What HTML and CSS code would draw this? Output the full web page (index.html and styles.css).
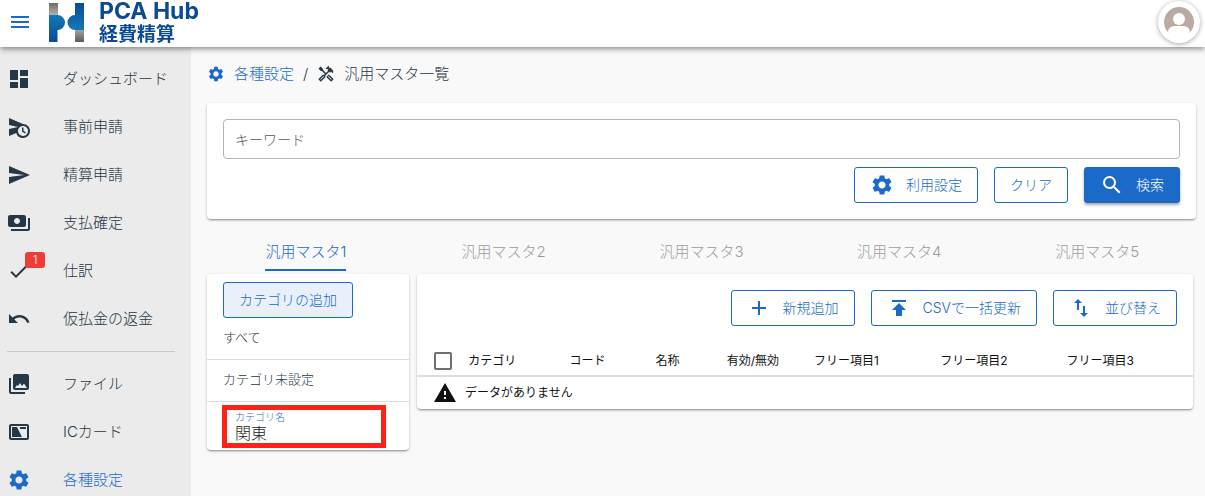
FILE: index.html
```html
<!DOCTYPE html>
<html lang="ja">
<head>
<meta charset="utf-8">
<title>汎用マスタ一覧 - PCA Hub 経費精算</title>
<link rel="stylesheet" href="styles.css">
</head>
<body>
<svg class="sprite" aria-hidden="true">
  <symbol id="gear" viewBox="0 0 24 24"><path d="M19.14 12.94c.04-.3.06-.61.06-.94 0-.32-.02-.64-.07-.94l2.03-1.58c.18-.14.23-.41.12-.61l-1.92-3.32c-.12-.22-.37-.29-.59-.22l-2.39.96c-.5-.38-1.03-.7-1.62-.94l-.36-2.54c-.04-.24-.24-.41-.48-.41h-3.84c-.24 0-.43.17-.47.41l-.36 2.54c-.59.24-1.13.57-1.62.94l-2.39-.96c-.22-.08-.47 0-.59.22L2.74 8.87c-.12.21-.08.47.12.61l2.03 1.58c-.05.3-.09.63-.09.94s.02.64.07.94l-2.03 1.58c-.18.14-.23.41-.12.61l1.92 3.32c.12.22.37.29.59.22l2.39-.96c.5.38 1.03.7 1.62.94l.36 2.54c.05.24.24.41.48.41h3.84c.24 0 .44-.17.47-.41l.36-2.54c.59-.24 1.13-.56 1.62-.94l2.39.96c.22.08.47 0 .59-.22l1.92-3.32c.12-.22.07-.47-.12-.61l-2.01-1.58zM12 15.6c-1.98 0-3.6-1.62-3.6-3.6s1.62-3.6 3.6-3.6 3.6 1.62 3.6 3.6-1.62 3.6-3.6 3.6z"/></symbol>
</svg>
<header class="topbar">
  <button class="menu-button" aria-label="メニュー"><svg class="icon" viewBox="0 0 24 24"><path d="M3 18h18v-2H3v2zm0-5h18v-2H3v2zm0-7v2h18V6H3z"/></svg></button>
  <a class="brand" href="#">
    <svg class="brand-mark" viewBox="0 0 35 39" aria-hidden="true">
      <defs>
        <linearGradient id="blueL" x1="0" y1="0" x2="0" y2="1"><stop offset="0" stop-color="#1479b8"/><stop offset="1" stop-color="#0b4a94"/></linearGradient>
        <linearGradient id="blueR" x1="0" y1="0" x2="0" y2="1"><stop offset="0" stop-color="#0b4a94"/><stop offset="1" stop-color="#1479b8"/></linearGradient>
        <linearGradient id="grayL" x1="0" y1="0" x2="0" y2="1"><stop offset="0" stop-color="#6f6a66"/><stop offset="1" stop-color="#b9b5b2"/></linearGradient>
        <linearGradient id="grayR" x1="0" y1="0" x2="0" y2="1"><stop offset="0" stop-color="#a5a19e"/><stop offset="1" stop-color="#5f5a57"/></linearGradient>
      </defs>
      <path fill="url(#grayL)" d="M0 0h9v13H0z"/>
      <path fill="url(#blueL)" d="M0 12h8.500a7.500 7.500 0 0 1 0 15V39H0z"/>
      <path fill="url(#blueR)" d="M26 0h9v27h-9a7.500 7.500 0 0 1 0-15z"/>
      <path fill="url(#grayR)" d="M26 27h9v12h-9z"/>
    </svg>
    <span class="brand-text"><span class="brand-name">PCA Hub</span><span class="brand-product">経費精算</span></span>
  </a>
  <button class="avatar" aria-label="アカウント">
    <svg viewBox="0 0 30 30"><defs><clipPath id="face"><circle cx="15" cy="15" r="15"/></clipPath></defs><g clip-path="url(#face)"><path fill="#b9aaa2" d="M0 0h30v26H0z"/><circle cx="15" cy="12" r="6" fill="#fff"/><path fill="#fff" d="M4 31V26c0-5 3-7 7-7h8c4 0 7 2 7 7v5zM0 26h30v4H0z"/></g></svg>
  </button>
</header>
<div class="shell">
  <nav class="sidebar">
    <a class="nav-item" href="#"><svg class="icon" viewBox="0 0 24 24"><path d="M3 13h8V3H3v10zm0 8h8v-6H3v6zm10 0h8V11h-8v10zm0-18v6h8V3h-8z"/></svg>ダッシュボード</a>
    <a class="nav-item" href="#"><svg class="icon" viewBox="0 0 24 24"><path d="M16.500 12.500H15v4l3 2 .75-1.230-2.250-1.520V12.500zM16 9L2 3v7l9 2-9 2v7l7.270-3.110C10.090 20.830 12.790 23 16 23c3.860 0 7-3.140 7-7s-3.140-7-7-7zm0 12c-2.750 0-4.980-2.220-5-4.970v-.07c.02-2.740 2.250-4.970 5-4.970 2.760 0 5 2.240 5 5S18.760 21 16 21z"/></svg>事前申請</a>
    <a class="nav-item" href="#"><svg class="icon" viewBox="0 0 24 24"><path d="M2.010 21L23 12 2.010 3 2 10l15 2-15 2z"/></svg>精算申請</a>
    <a class="nav-item" href="#"><svg class="icon" viewBox="0 0 24 24"><path d="M19 14V6c0-1.100-.9-2-2-2H3c-1.100 0-2 .9-2 2v8c0 1.100.9 2 2 2h14c1.100 0 2-.9 2-2zm-9-1c-1.660 0-3-1.340-3-3s1.340-3 3-3 3 1.340 3 3-1.340 3-3 3zm13-6v11c0 1.100-.9 2-2 2H4v-2h17V7h2z"/></svg>支払確定</a>
    <a class="nav-item" href="#"><svg class="icon" viewBox="0 0 24 24"><path d="M9 16.170L4.830 12l-1.420 1.410L9 19 21 7l-1.410-1.410z"/></svg><span class="badge">1</span>仕訳</a>
    <a class="nav-item" href="#"><svg class="icon" viewBox="0 0 24 24"><path d="M12.500 8c-2.650 0-5.050.99-6.900 2.600L2 7v9h9l-3.620-3.620c1.390-1.160 3.160-1.880 5.120-1.880 3.540 0 6.550 2.310 7.600 5.500l2.370-.78C21.080 11.030 17.150 8 12.500 8z"/></svg>仮払金の返金</a>
    <hr class="nav-divider">
    <a class="nav-item" href="#"><svg class="icon" viewBox="0 0 24 24"><path d="M22 16V4c0-1.100-.9-2-2-2H8c-1.100 0-2 .9-2 2v12c0 1.100.9 2 2 2h12c1.100 0 2-.9 2-2zM8 16l2-3 1 1 2-3 2 3 2-2.500L20 16zM2 6v14c0 1.100.9 2 2 2h14v-2H4V6H2z"/></svg>ファイル</a>
    <a class="nav-item" href="#"><svg class="icon" viewBox="0 0 24 24"><path fill-rule="evenodd" d="M4 4h16a2 2 0 0 1 2 2v12a2 2 0 0 1-2 2H4a2 2 0 0 1-2-2V6a2 2 0 0 1 2-2zm0 2v12h16V6z"/><path d="M5 7h5l5 10H5zM13 7h6v2h-6z"/></svg>ICカード</a>
    <a class="nav-item active" href="#" aria-current="page"><svg class="icon"><use href="#gear"/></svg>各種設定</a>
  </nav>
  <main class="content">
    <nav class="breadcrumb" aria-label="パンくず">
      <a href="#"><svg class="icon small"><use href="#gear"/></svg>各種設定</a>
      <span class="slash">/</span>
      <span class="here"><svg class="icon small" viewBox="0 0 24 24"><path d="M21.670 18.170l-5.300-5.300h-.99l-2.540 2.540v.99l5.300 5.300c.39.39 1.020.39 1.410 0l2.120-2.120c.39-.38.39-1.020 0-1.410zm-2.830 1.420l-4.240-4.240.71-.71 4.240 4.240-.71.71z"/><path d="M17.340 10.190l1.410-1.410 2.120 2.120c1.170-1.170 1.170-3.070 0-4.240l-3.540-3.540-1.410 1.410V1.710l-.7-.71-3.540 3.540.71.71h2.830l-1.410 1.410 1.060 1.060-2.890 2.890-4.130-4.130V5.060L4.830 2.040 2 4.870 5.030 7.900h1.410l4.130 4.130-.85.85H7.600l-5.300 5.300c-.39.39-.39 1.020 0 1.410l2.120 2.120c.39.39 1.020.39 1.410 0l5.300-5.300v-2.120l5.150-5.150 1.060 1.050zm-7.980 5.150l-4.240 4.240-.71-.71 4.240-4.240.71.71z"/></svg>汎用マスタ一覧</span>
    </nav>
    <form class="card search">
      <input class="keyword" type="text" placeholder="キーワード" aria-label="キーワード">
      <div class="actions">
        <button type="button" class="btn with-icon"><svg class="icon"><use href="#gear"/></svg>利用設定</button>
        <button type="reset" class="btn">クリア</button>
        <button type="button" class="btn with-icon primary"><svg class="icon" viewBox="0 0 24 24"><path d="M15.500 14h-.79l-.28-.27A6.471 6.471 0 0 0 16 9.500 6.500 6.500 0 1 0 9.500 16c1.610 0 3.090-.59 4.230-1.570l.27.28v.79l5 4.990L20.490 19l-4.990-5zm-6 0C7.010 14 5 11.990 5 9.500S7.010 5 9.500 5 14 7.010 14 9.500 11.990 14 9.500 14z"/></svg>検索</button>
      </div>
    </form>
    <div class="tabs" role="tablist">
      <button class="tab" role="tab" aria-selected="true"><span>汎用マスタ1</span></button>
      <button class="tab" role="tab" aria-selected="false"><span>汎用マスタ2</span></button>
      <button class="tab" role="tab" aria-selected="false"><span>汎用マスタ3</span></button>
      <button class="tab" role="tab" aria-selected="false"><span>汎用マスタ4</span></button>
      <button class="tab" role="tab" aria-selected="false"><span>汎用マスタ5</span></button>
    </div>
    <div class="panels">
      <section class="card categories">
        <button class="btn tinted">カテゴリの追加</button>
        <a class="category" href="#">すべて</a>
        <a class="category" href="#">カテゴリ未設定</a>
        <div class="name-field">
          <label for="category-name">カテゴリ名</label>
          <input id="category-name" type="text" value="関東">
        </div>
      </section>
      <section class="card records">
        <div class="actions">
          <button class="btn with-icon"><svg class="icon" viewBox="0 0 24 24"><path d="M19 13h-6v6h-2v-6H5v-2h6V5h2v6h6v2z"/></svg>新規追加</button>
          <button class="btn with-icon"><svg class="icon" viewBox="0 0 24 24"><path d="M5 4v2h14V4H5zm0 10h4v6h6v-6h4l-7-7-7 7z"/></svg>CSVで一括更新</button>
          <button class="btn with-icon"><svg class="icon" viewBox="0 0 24 24"><path d="M9 3L5 6.990h3V14h2V6.990h3L9 3zm7 14.010V10h-2v7.010h-3L15 21l4-3.990h-3z"/></svg>並び替え</button>
        </div>
        <table class="grid">
          <colgroup><col class="c-check"><col class="c-category"><col class="c-code"><col class="c-name"><col class="c-state"><col class="c-free"><col class="c-free"><col class="c-free"></colgroup>
          <thead><tr>
            <th class="check"><input type="checkbox" aria-label="すべて選択"></th>
            <th>カテゴリ</th><th>コード</th><th>名称</th><th>有効/無効</th><th>フリー項目1</th><th>フリー項目2</th><th>フリー項目3</th>
          </tr></thead>
          <tbody><tr><td colspan="8"><div class="empty"><svg class="icon" viewBox="0 0 24 24"><path d="M1 21h22L12 2 1 21zm12-3h-2v-2h2v2zm0-4h-2v-4h2v4z"/></svg>データがありません</div></td></tr></tbody>
        </table>
      </section>
    </div>
  </main>
</div>
</body>
</html>
```
FILE: styles.css
```css
:root {
  --blue: #1b6ac9;
  --ink: #263746;
}
* { box-sizing: border-box; }
body {
  margin: 0;
  height: 100vh;
  display: flex;
  flex-direction: column;
  background: #f9f9f9;
  color: var(--ink);
  font: 300 15px/20px Inter, "Noto Sans CJK JP", sans-serif;
}
a { color: inherit; text-decoration: none; }
button, input { font: inherit; color: inherit; margin: 0; }
button { border: 0; padding: 0; background: none; cursor: pointer; }
.sprite { display: none; }
.icon { width: 24px; height: 24px; flex: none; fill: currentColor; }
.icon.small { width: 18px; height: 18px; }

.topbar {
  flex: none;
  height: 47px;
  display: flex;
  align-items: center;
  padding: 0 5px 3px 8px;
  background: #fff;
  box-shadow: 0 2px 4px -1px rgba(0,0,0,.3), 0 4px 5px rgba(0,0,0,.18);
  z-index: 1;
}
.menu-button { color: var(--blue); display: flex; }
.brand { display: flex; align-items: center; gap: 15px; margin-left: 17px; color: #0b4a94; }
.brand-mark { width: 35px; height: 39px; }
.brand-text { display: flex; flex-direction: column; }
.brand-name { font: 700 23px/22px Inter, sans-serif; }
.brand-product { font: 700 19px/22px "Noto Sans CJK JP", sans-serif; }
.avatar {
  width: 42px;
  height: 42px;
  margin-left: auto;
  display: flex;
  align-items: center;
  justify-content: center;
  border-radius: 50%;
  background: #fff;
  box-shadow: 0 1px 5px rgba(0,0,0,.35);
}
.avatar svg { width: 30px; height: 30px; }

.shell { flex: 1; min-height: 0; display: flex; }
.sidebar {
  flex: none;
  width: 191px;
  padding-top: 8px;
  background: #ebebeb;
  overflow-y: auto;
  scrollbar-width: none;
}
.nav-item {
  position: relative;
  height: 48px;
  display: flex;
  align-items: center;
  gap: 32px;
  padding-left: 7px;
}
.nav-item.active { color: var(--blue); }
.nav-divider { margin: 8px 16px 8px 7px; border: 0; border-top: 1px solid #c8c8c8; }
.badge {
  position: absolute;
  left: 25px;
  top: 5px;
  width: 20px;
  height: 16px;
  border-radius: 3px;
  background: #ee3c37;
  color: #fff;
  font-size: 12px;
  line-height: 16px;
  text-align: center;
}

.content { flex: 1; min-width: 0; padding: 17px 9px 16px 16px; overflow: hidden; }
.breadcrumb { display: flex; align-items: center; gap: 9px; height: 20px; margin-bottom: 19px; }
.breadcrumb a, .here { display: flex; align-items: center; gap: 9px; }
.breadcrumb a { color: var(--blue); }
.card {
  background: #fff;
  border-radius: 4px;
  box-shadow: 0 2px 2px -1px rgba(0,0,0,.3), 0 1px 3px rgba(0,0,0,.22);
}
.search { padding: 16px; }
.keyword {
  display: block;
  width: 100%;
  height: 40px;
  padding: 0 11px;
  border: 1px solid #b5b5b5;
  border-radius: 4px;
  background: #fff;
  font-size: 14px;
}
.keyword::placeholder { color: #555; opacity: 1; }
.actions { display: flex; justify-content: flex-end; gap: 16px; }
.search .actions { margin-top: 8px; }
.btn {
  height: 36px;
  display: flex;
  align-items: center;
  gap: 12px;
  padding: 0 15px;
  border: 1px solid var(--blue);
  border-radius: 3px;
  color: var(--blue);
  font-size: 14px;
  white-space: nowrap;
}
.btn.primary { background: var(--blue); color: #fff; box-shadow: 0 2px 3px rgba(0,0,0,.35); }
.btn.tinted { background: #e9f0f9; }

.tabs { display: flex; height: 55px; padding-top: 19px; }
.tab { flex: 1; display: flex; justify-content: center; align-items: flex-start; color: #9c9c9c; }
.tab span { padding: 4px 0 7px; border-bottom: 2px solid transparent; }
.tab[aria-selected="true"] { color: var(--blue); }
.tab[aria-selected="true"] span { border-color: var(--blue); }

.panels { display: flex; align-items: flex-start; gap: 8px; padding-right: 3px; }
.categories { flex: none; width: 202px; padding: 8px 0 2px; }
.categories .btn { margin-left: 16px; }
.category {
  display: block;
  height: 42px;
  padding: 0 16px;
  border-bottom: 1px solid #dcdcdc;
  font-size: 13px;
  line-height: 38px;
}
.name-field {
  display: flex;
  flex-direction: column;
  margin: 3px 23px 0 15px;
  padding: 1px 8px;
  border: 5px solid #fb2318;
}
.name-field label { color: var(--blue); font-size: 10px; line-height: 12px; }
.name-field input {
  width: 100%;
  height: 19px;
  padding: 0;
  border: 0;
  outline: 0;
  background: none;
  color: #222;
  font-size: 16px;
}
.records { flex: 1; min-width: 0; padding-top: 16px; color: #111; }
.records .actions { padding-right: 16px; }
.grid { width: 100%; margin-top: 20px; table-layout: fixed; border-collapse: collapse; font-size: 12px; font-weight: 400; line-height: 18px; }
.grid th { height: 30px; padding: 0; text-align: left; font-weight: 400; border-bottom: 2px solid #dedede; white-space: nowrap; }
.grid th.check { padding-left: 17px; }
.grid td { padding: 0; }
.grid input {
  appearance: none;
  display: block;
  width: 18px;
  height: 18px;
  border: 2px solid #707070;
  border-radius: 2px;
}
.c-check { width: 51px; }
.c-category { width: 101px; }
.c-code { width: 86px; }
.c-name { width: 71px; }
.c-state { width: 87px; }
.c-free { width: 126px; }
.empty { display: flex; align-items: center; gap: 8px; height: 32px; padding-left: 16px; }
```
